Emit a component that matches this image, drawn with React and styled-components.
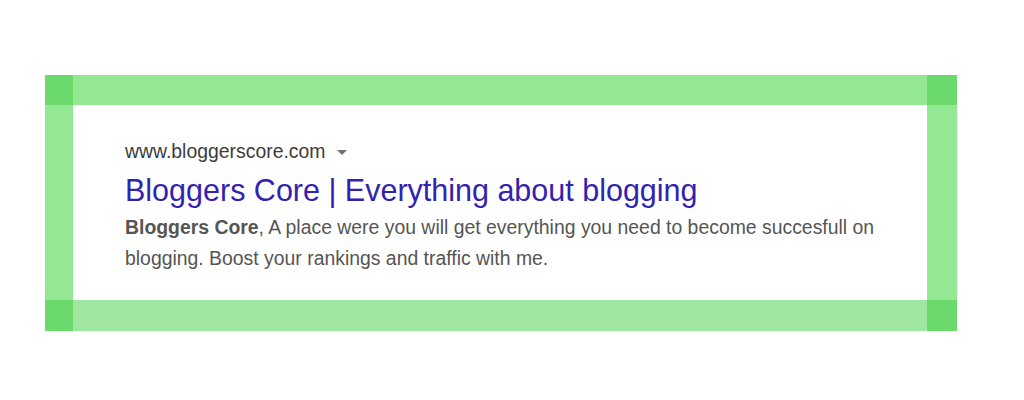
import styled, { createGlobalStyle } from "styled-components";

const GlobalStyle = createGlobalStyle`
  html, body {
    margin: 0;
    padding: 0;
    background: #fff;
  }
  body {
    font-family: "Liberation Sans", Arial, sans-serif;
  }
`;

const Page = styled.div`
  width: 1024px;
  height: 400px;
  padding: 75px 0 0 45px;
  box-sizing: border-box;
`;

const Frame = styled.div`
  width: 912px;
  display: grid;
  grid-template-columns: 28px 1fr 30px;
  grid-template-rows: 30px 195px 31px;
`;

const Band = styled.div`
  background: ${(p) => (p.corner ? "#6cd96c" : p.pale ? "#a1e6a1" : "#94e894")};
`;

const Result = styled.div`
  background: #fff;
  padding: 33px 0 0 52px;
`;

const UrlRow = styled.div`
  display: flex;
  align-items: center;
  height: 26px;
  font-size: 19.4px;
  line-height: 26px;
  color: #3c3c3c;
`;

const Caret = styled.span`
  width: 0;
  height: 0;
  margin: 2px 0 0 12px;
  border-left: 5.5px solid transparent;
  border-right: 5.5px solid transparent;
  border-top: 5.5px solid #707070;
`;

const Title = styled.h3`
  margin: 9px 0 0;
  font-size: 30.5px;
  line-height: 34px;
  font-weight: 400;
  color: #3222b2;
`;

const Snippet = styled.p`
  margin: 5px 0 0;
  width: 780px;
  font-size: 19.4px;
  line-height: 30.6px;
  color: #555;
  b {
    font-weight: 700;
  }
`;

const App = () => {
  return (
    <Page>
      <GlobalStyle />
      <Frame>
        <Band corner />
        <Band />
        <Band corner />
        <Band />
        <Result>
          <UrlRow>
            www.bloggerscore.com
            <Caret />
          </UrlRow>
          <Title>Bloggers Core | Everything about blogging</Title>
          <Snippet>
            <b>Bloggers Core</b>, A place were you will get everything you need to become
            succesfull on blogging. Boost your rankings and traffic with me.
          </Snippet>
        </Result>
        <Band />
        <Band corner />
        <Band pale />
        <Band corner />
      </Frame>
    </Page>
  );
};

export default App;
